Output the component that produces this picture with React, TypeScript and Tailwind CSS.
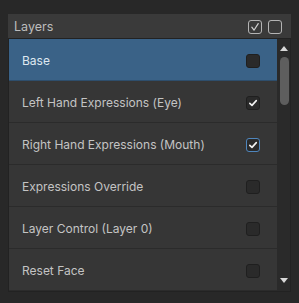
const ROWS = [
    { label: "Base", checked: false, selected: true, focus: false },
    { label: "Left Hand Expressions (Eye)", checked: true, selected: false, focus: false },
    { label: "Right Hand Expressions (Mouth)", checked: true, selected: false, focus: true },
    { label: "Expressions Override", checked: false, selected: false, focus: false },
    { label: "Layer Control (Layer 0)", checked: false, selected: false, focus: false },
    { label: "Reset Face", checked: false, selected: false, focus: false },
];

function Check({ size = 10 }: { size?: number }) {
    return (
        <svg width={size} height={size} viewBox="0 0 10 10" fill="none">
            <path d="M1.8 5.3 L4 7.4 L8.3 2.6" stroke="#f2f2f2" strokeWidth="1.6" strokeLinecap="round" strokeLinejoin="round" />
        </svg>
    );
}

export default function App() {
    return (
        <div
            className="w-[299px] h-[303px] bg-[#282828] pt-[14px] pl-[8px]"
            style={{ fontFamily: "Inter, 'Noto Sans', sans-serif" }}
        >
            <div className="w-[283px]">
                {/* Header */}
                <div className="h-[24px] bg-[#3a3a3a] flex items-center pl-[6px] pr-[9px]">
                    <span className="text-[12.5px] text-[#bdbdbd] leading-none pt-[2px]">Layers</span>
                    <div className="ml-auto flex items-center gap-[6px] pt-[1px]">
                        <div className="w-[14px] h-[14px] rounded-[3px] border border-[#b4b4b4] flex items-center justify-center">
                            <svg width="10" height="10" viewBox="0 0 10 10" fill="none">
                                <path d="M1.8 5.2 L4 8.2 L8.2 1.6" stroke="#d0d0d0" strokeWidth="1.2" strokeLinecap="round" strokeLinejoin="round" />
                            </svg>
                        </div>
                        <div className="w-[14px] h-[14px] rounded-[3px] border border-[#b4b4b4]" />
                    </div>
                </div>

                {/* List */}
                <div className="flex border-t border-l border-b border-[#222222] w-[283px]">
                    <div className="w-[268px] bg-[#363636]">
                        {ROWS.map(row => (
                            <div
                                key={row.label}
                                className={
                                    row.selected
                                        ? "h-[42px] flex items-center pl-[13px] pr-[17px] bg-[#3a6287] border-b border-[#2e4e6c]"
                                        : "h-[42px] flex items-center pl-[13px] pr-[17px] border-b border-[#2b2b2b]"
                                }
                            >
                                <span
                                    className={
                                        row.selected
                                            ? "text-[12px] text-[#dfe8f0] pt-[2px]"
                                            : "text-[12px] text-[#c4c4c4] pt-[2px]"
                                    }
                                >
                                    {row.label}
                                </span>
                                <div
                                    className={
                                        row.focus
                                            ? "ml-auto mt-[2px] w-[14px] h-[14px] rounded-[3px] bg-[#2a2a2a] border border-[#4f86bd] flex items-center justify-center"
                                            : "ml-auto mt-[2px] w-[14px] h-[14px] rounded-[3px] bg-[#2a2a2a] border border-[#1f1f1f] flex items-center justify-center"
                                    }
                                >
                                    {row.checked && <Check />}
                                </div>
                            </div>
                        ))}
                    </div>

                    {/* Scrollbar */}
                    <div className="w-[14px] bg-[#2a2a2a] border-r border-[#222222] flex flex-col items-center pt-[7px] pb-[8px]">
                        <svg width="8" height="5" viewBox="0 0 8 5" className="ml-[1px]">
                            <path d="M0 5 L4 0 L8 5 Z" fill="#d8d8d8" />
                        </svg>
                        <div className="mt-[6px] ml-[1px] w-[9px] h-[48px] rounded-full bg-[#5e5e5e]" />
                        <svg width="8" height="5" viewBox="0 0 8 5" className="mt-auto ml-[1px]">
                            <path d="M0 0 L8 0 L4 5 Z" fill="#d8d8d8" />
                        </svg>
                    </div>
                </div>
            </div>
        </div>
    );
}
